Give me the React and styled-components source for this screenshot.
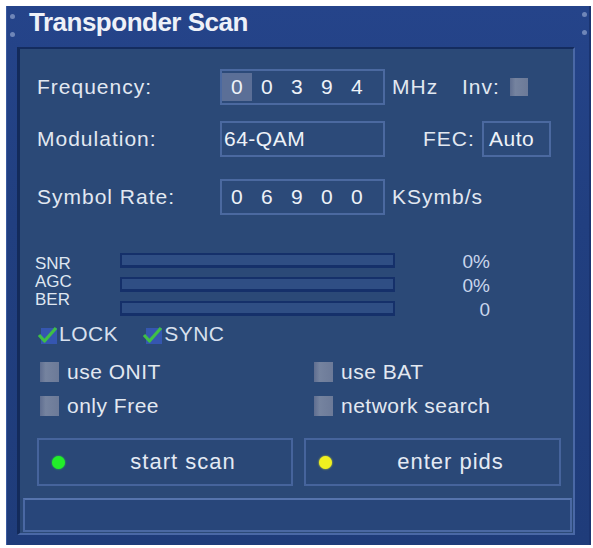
import React from 'react';
import styled, { createGlobalStyle } from 'styled-components';

const Global = createGlobalStyle`
  html, body { margin: 0; padding: 0; background: #ffffff; }
  body { font-family: "Liberation Sans", Arial, sans-serif; }
`;

const Window = styled.div`
  position: relative;
  box-sizing: border-box;
  margin: 6px 0 0 6px;
  width: 585px;
  height: 539px;
  padding: 0 16px 10px 11px;
  display: flex;
  flex-direction: column;
  background: linear-gradient(180deg, #25448a 0%, #213f80 40%, #1f3c7a 100%);
  box-shadow: inset 1px 0 0 #3a5aa0, inset -2px 0 0 #1a3470;
`;

const TitleBar = styled.div`
  position: relative;
  height: 41px;
  flex: none;
  padding: 2px 0 0 12px;
  box-sizing: border-box;
  font-size: 26px;
  line-height: 29px;
  font-weight: bold;
  letter-spacing: -0.5px;
  color: #eef1f8;
  &::before, &::after {
    content: "";
    position: absolute;
    top: 8px;
    width: 5px;
    height: 5px;
    border-radius: 50%;
    background: #6f86b8;
    box-shadow: 0 18px 0 #6f86b8;
  }
  &::before { left: -7px; }
  &::after { right: -12px; top: 6px; }
`;

const Panel = styled.div`
  flex: 1;
  box-sizing: border-box;
  display: flex;
  flex-direction: column;
  background: #2b4977;
  border-top: 2px solid #142c5e;
  border-left: 3px solid #132a5a;
  border-right: 2px solid #4a68a6;
  border-bottom: 2px solid #4a68a6;
  color: #e2e8f1;
`;

const Content = styled.div`
  padding: 20px 12px 0 17px;
  display: flex;
  flex-direction: column;
`;

const FieldRow = styled.div`
  display: grid;
  grid-template-columns: 183px 165px auto;
  align-items: center;
  height: 36px;
  margin-top: ${p => p.$mt || 0}px;
`;

const Label = styled.span`
  font-size: 21px;
  letter-spacing: 1px;
  white-space: nowrap;
`;

const Field = styled.div`
  box-sizing: border-box;
  height: ${p => p.$h || 36}px;
  width: ${p => (p.$w ? `${p.$w}px` : 'auto')};
  border: 2px solid #4b69a0;
  background: #2c4a79;
  display: flex;
  align-items: center;
  padding-left: ${p => p.$pl ?? 0}px;
  font-size: 21px;
  letter-spacing: 0.5px;
  color: #eef2f8;
`;

const Digit = styled.span`
  width: 30px;
  height: 28px;
  line-height: 28px;
  text-align: center;
  background: ${p => (p.$active ? '#5b6f97' : 'transparent')};
`;

const Trail = styled.div`
  display: flex;
  align-items: center;
  padding-left: ${p => p.$pl || 0}px;
`;

const Unit = styled.span`
  font-size: 21px;
  letter-spacing: 1px;
  width: ${p => (p.$w ? `${p.$w}px` : 'auto')};
  white-space: nowrap;
`;

const Box = styled.span`
  display: inline-block;
  width: ${p => p.$w || 19}px;
  height: ${p => p.$h || 20}px;
  margin-left: ${p => p.$ml || 0}px;
  flex: none;
  background: linear-gradient(90deg, #5f6e90 0%, #75839f 30%, #6c7a98 100%);
`;

const Signal = styled.div`
  display: flex;
  margin-top: 38px;
  margin-left: -2px;
`;

const SigLabels = styled.div`
  width: 85px;
  display: flex;
  flex-direction: column;
  font-size: 17px;
  line-height: 18px;
  padding-top: 2px;
  color: #dfe6f1;
`;

const SigBars = styled.div`
  width: 275px;
  display: flex;
  flex-direction: column;
  gap: 9px;
`;

const Bar = styled.div`
  box-sizing: border-box;
  height: 15px;
  border: 2px solid #15306a;
  border-bottom-width: 3px;
  background: #2f4e84;
`;

const SigValues = styled.div`
  width: 95px;
  display: flex;
  flex-direction: column;
  gap: 9px;
  text-align: right;
  font-size: 19px;
  color: #c9d6ec;
  & > span { height: 15px; line-height: 17px; }
`;

const StatusLine = styled.div`
  display: flex;
  align-items: center;
  height: 22px;
  margin-top: 7px;
  font-size: 21px;
  letter-spacing: 0.5px;
  color: #d8e0ee;
`;

const Flag = styled.span`
  display: inline-flex;
  align-items: center;
  gap: 1px;
  margin-right: ${p => p.$mr || 0}px;
`;

const Options = styled.div`
  display: grid;
  grid-template-columns: 274px auto;
  grid-auto-rows: 34px;
  margin-top: 10px;
  padding-left: 3px;
`;

const Option = styled.div`
  display: flex;
  align-items: center;
  gap: 8px;
  font-size: 21px;
  letter-spacing: 0.5px;
`;

const Buttons = styled.div`
  display: grid;
  grid-template-columns: 256px 257px;
  gap: 11px;
  margin-top: 15px;
`;

const Button = styled.div`
  position: relative;
  box-sizing: border-box;
  height: 48px;
  border: 2px solid #46649c;
  background: #2a4877;
  display: flex;
  align-items: center;
  padding-left: 36px;
  font-size: 22px;
  letter-spacing: 1px;
  color: #e4eaf4;
`;

const Dot = styled.span`
  position: absolute;
  left: 13px;
  top: 50%;
  width: 13px;
  height: 13px;
  margin-top: -6px;
  border-radius: 50%;
  background: ${p => p.$color};
  box-shadow: 0 0 2px ${p => p.$color};
`;

const ButtonText = styled.span`
  flex: 1;
  text-align: center;
`;

const StatusBar = styled.div`
  box-sizing: border-box;
  height: 34px;
  margin: auto 1px 1px 3px;
  border: 2px solid #4a68a3;
  border-top-color: #5674ad;
  background: #28467a;
`;

function Check() {
  return (
    <svg width="21" height="21" viewBox="0 0 21 21">
      <rect x="4" y="4" width="16" height="16" fill="#3556b0" />
      <path d="M2 11 L7.5 17 L19 4" fill="none" stroke="#3fbf46" strokeWidth="3.2" strokeLinejoin="round" />
    </svg>
  );
}

function DigitField({ digits, active }) {
  return (
    <Field $pl={0}>
      {digits.split('').map((d, i) => (
        <Digit key={i} $active={i === active}>{d}</Digit>
      ))}
    </Field>
  );
}

export default function App() {
  return (
    <>
      <Global />
      <Window>
        <TitleBar>Transponder Scan</TitleBar>
        <Panel>
          <Content>
            <FieldRow>
              <Label>Frequency:</Label>
              <DigitField digits="00394" active={0} />
              <Trail $pl={7}>
                <Unit $w={70}>MHz</Unit>
                <Unit>Inv:</Unit>
                <Box $w={18} $h={18} $ml={10} />
              </Trail>
            </FieldRow>
            <FieldRow $mt={16}>
              <Label>Modulation:</Label>
              <Field $pl={2}>64-QAM</Field>
              <Trail $pl={38}>
                <Unit $w={59}>FEC:</Unit>
                <Field $w={69} $pl={5}>Auto</Field>
              </Trail>
            </FieldRow>
            <FieldRow $mt={22}>
              <Label>Symbol Rate:</Label>
              <DigitField digits="06900" active={-1} />
              <Trail $pl={7}>
                <Unit>KSymb/s</Unit>
              </Trail>
            </FieldRow>

            <Signal>
              <SigLabels>
                <span>SNR</span>
                <span>AGC</span>
                <span>BER</span>
              </SigLabels>
              <SigBars>
                <Bar />
                <Bar />
                <Bar />
              </SigBars>
              <SigValues>
                <span>0%</span>
                <span>0%</span>
                <span>0</span>
              </SigValues>
            </Signal>

            <StatusLine>
              <Flag $mr={24}><Check />LOCK</Flag>
              <Flag><Check />SYNC</Flag>
            </StatusLine>

            <Options>
              <Option><Box />use ONIT</Option>
              <Option><Box />use BAT</Option>
              <Option><Box />only Free</Option>
              <Option><Box />network search</Option>
            </Options>

            <Buttons>
              <Button><Dot $color="#22ee2a" /><ButtonText>start scan</ButtonText></Button>
              <Button><Dot $color="#f0f020" /><ButtonText>enter pids</ButtonText></Button>
            </Buttons>
          </Content>
          <StatusBar />
        </Panel>
      </Window>
    </>
  );
}
